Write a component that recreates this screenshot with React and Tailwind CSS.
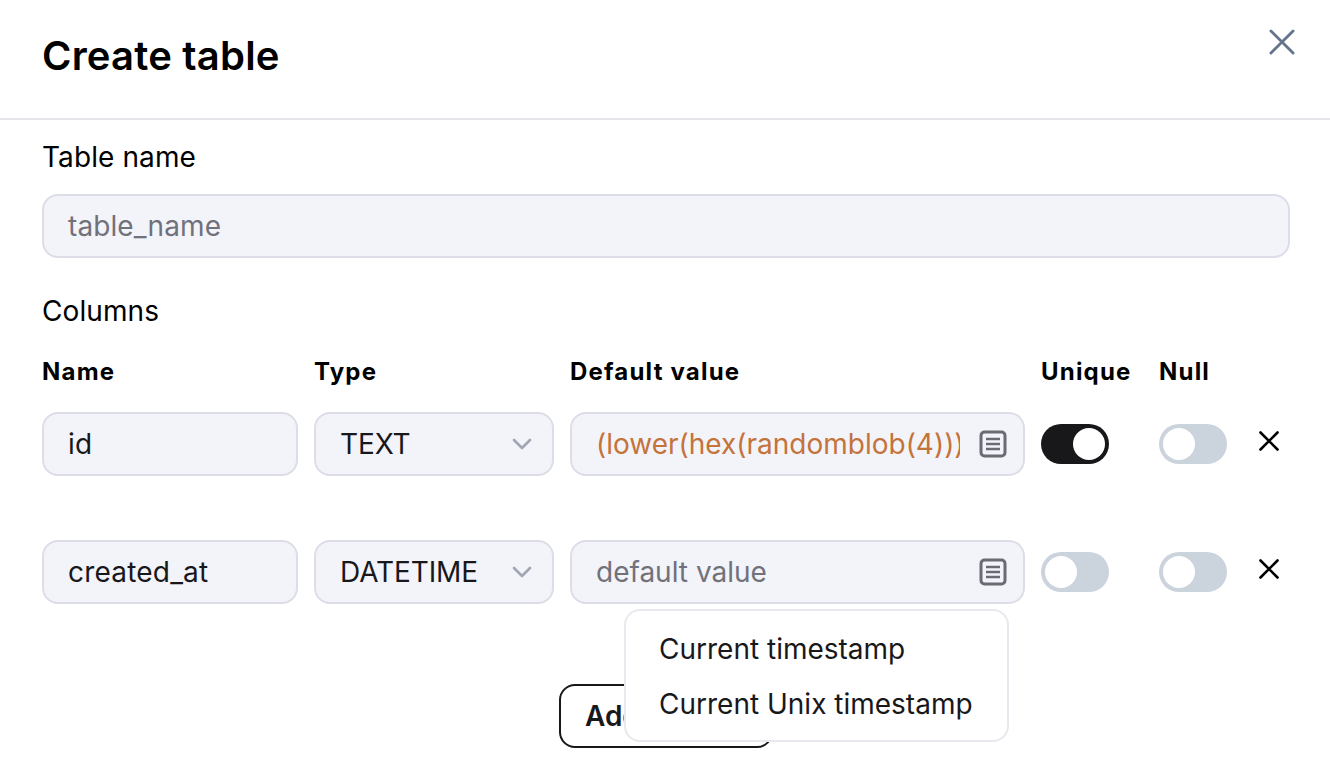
import React from "react";

const inputBox = "h-16 rounded-2xl border-2 border-[#dddde8] bg-[#f3f3fa] flex items-center";

function ListIcon() {
  return (
    <svg width="28" height="28" viewBox="0 0 28 28" fill="none" stroke="#6b6b76" strokeWidth="3" className="shrink-0 ml-[1px]">
      <rect x="2" y="2" width="24" height="24" rx="3.5" />
      <path d="M7 9h14M7 14h14M7 19h14" strokeWidth="2.6" />
    </svg>
  );
}

function Chevron() {
  return (
    <svg width="20" height="12" viewBox="0 0 20 12" fill="none" stroke="#a0a6b4" strokeWidth="2.6" strokeLinecap="round" strokeLinejoin="round" className="shrink-0">
      <path d="M2 2l8 8 8-8" />
    </svg>
  );
}

function Toggle({ on }) {
  return (
    <div className={`w-[68px] h-10 rounded-full p-1 flex items-center ${on ? "bg-[#18181b] justify-end" : "bg-[#cbd3dc] justify-start"}`}>
      <div className="w-8 h-8 rounded-full bg-white" />
    </div>
  );
}

function Cross({ size = 20, color = "#000", width = 2.6 }) {
  return (
    <svg width={size} height={size} viewBox="0 0 20 20" fill="none" stroke={color} strokeWidth={width} strokeLinecap="round">
      <path d="M1.5 1.5l17 17M18.5 1.5l-17 17" />
    </svg>
  );
}

function Row({ name, type, value, placeholder, unique }) {
  return (
    <div className="grid grid-cols-[256px_240px_455px_102px_68px_auto] gap-x-4 items-start">
      <div className={`${inputBox} px-6 text-[#18181b] tracking-[0.2px]`}>{name}</div>
      <div className={`${inputBox} pl-6 pr-[20px] justify-between text-[#18181b] tracking-[-0.1px]`}>
        <span>{type}</span>
        <Chevron />
      </div>
      <div className={`${inputBox} pl-6 pr-[16px] justify-between`}>
        {value ? (
          <span className="text-[#c4733a] w-[364px] overflow-hidden whitespace-nowrap">{value}</span>
        ) : (
          <span className="text-[#71717a]">{placeholder}</span>
        )}
        <ListIcon />
      </div>
      <div className="h-16 flex items-center">
        <Toggle on={unique} />
      </div>
      <div className="h-16 flex items-center">
        <Toggle />
      </div>
      <div className="h-[58px] flex items-center pl-[16px]">
        <Cross />
      </div>
    </div>
  );
}

export default function App() {
  return (
    <div className="relative w-[1330px] h-[764px] overflow-hidden bg-white text-[28px] leading-10 text-black font-['Inter',sans-serif]">
      <header className="h-[120px] border-b-2 border-[#e4e6ea] pl-[42px] pr-[35px] flex justify-between items-start">
        <h1 className="mt-[36px] text-[40px] leading-10 font-semibold tracking-[0.2px]">Create table</h1>
        <button className="mt-[29px]">
          <Cross size={26} color="#64748b" width={2.2} />
        </button>
      </header>
      <main className="px-[42px] pt-[17px]">
        <label className="block h-10 leading-10 tracking-[0.1px]">Table name</label>
        <div className={`${inputBox} mt-[17px] w-[1248px] px-6 text-[#71717a] tracking-[0.1px]`}>table_name</div>
        <h2 className="mt-[33px] h-10 leading-10 font-normal tracking-[0.1px]">Columns</h2>
        <div className="mt-[21px] grid grid-cols-[256px_240px_455px_102px_68px] gap-x-4 text-[24px] leading-10 font-bold tracking-[1.2px]">
          <div>Name</div>
          <div>Type</div>
          <div>Default value</div>
          <div>Unique</div>
          <div>Null</div>
        </div>
        <div className="mt-5 flex flex-col gap-16">
          <Row name="id" type="TEXT" value="(lower(hex(randomblob(4)))" unique />
          <Row name="created_at" type="DATETIME" placeholder="default value" />
        </div>
        <div className="mt-20 flex justify-center pl-[2px]">
          <button className="w-[214px] h-16 rounded-2xl border-2 border-[#18181b] font-semibold text-[#18181b] bg-white">
            Add column
          </button>
        </div>
      </main>
      <div className="absolute left-[624px] top-[609px] w-[385px] h-[133px] rounded-2xl border-2 border-[#e8e9ee] bg-white pl-[33px] pt-[18px] flex flex-col gap-[15px] text-[#18181b]">
        <div>Current timestamp</div>
        <div>Current Unix timestamp</div>
      </div>
    </div>
  );
}
